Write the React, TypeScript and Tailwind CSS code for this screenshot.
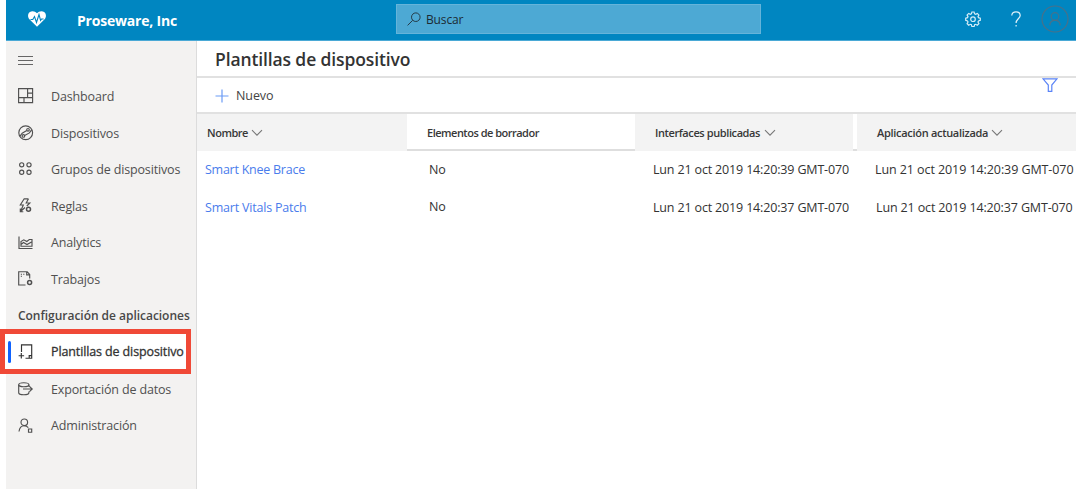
import type { ReactNode } from "react";

function Icon({ children, className = "" }: { children: ReactNode; className?: string }) {
  return (
    <svg viewBox="0 0 16 16" fill="none" stroke="currentColor" strokeWidth="1.15" className={"h-4 w-4 shrink-0 " + className}>
      {children}
    </svg>
  );
}

function Chevron() {
  return (
    <svg viewBox="0 0 12 8" fill="none" stroke="#777" strokeWidth="1.1" className="h-2 w-3 shrink-0">
      <path d="M1 1.2 6 6.2l5-5" />
    </svg>
  );
}

const icons = {
  dashboard: <Icon><path d="M.6.6h14v14H.6zM9.600.6v9M.6 9.600h14M9.600 5.100h5M6 9.600v5" /></Icon>,
  devices: <Icon><circle cx="7.700" cy="7.700" r="6.900" /><circle cx="10" cy="4.800" r="1.300" /><circle cx="5.400" cy="10.900" r="1.300" /><path d="M2 11.200 4.200 8.200 8.800 5.600M6.600 10.500 11.400 7.900 13.600 4.800" /></Icon>,
  groups: <Icon><circle cx="3.700" cy="3.800" r="2.100" /><circle cx="11" cy="3.800" r="2.100" /><circle cx="3.700" cy="11.200" r="2.100" /><circle cx="11" cy="11.200" r="2.100" /></Icon>,
  rules: <Icon><path d="M10.500.8H6.200L2.300 7h3L2.500 13.500l4.500-4M10.500.8 8.200 5h3.600L8.800 8M2.300 10.500v3.200h3" /><circle cx="10.500" cy="11.300" r="2" strokeWidth="1.500" /></Icon>,
  analytics: <Icon><path d="M1 1.500v12h13.500M3 11.200V6.500l2.800-1.700 3 1.700 2.500-2h2.700v6.700zM3 9.500 5.500 7.500l3.500 2 4.500-2.500" /></Icon>,
  jobs: <Icon><path d="M7.500 14H.7V.7h8.500L11.700 3.500v4M8.700.8v3h3M2.800 3.200h1.200M5.200 3.200h1.200M2.800 5.200h1.200" /><circle cx="11.600" cy="11.600" r="2" strokeWidth="1.500" /></Icon>,
  templates: <Icon><path d="M3.500 8V.8h10.200v13.400H7.500M11.200 14.200v-2.600h2.500M3.300 9v5.500M.6 11.700h5.500" /></Icon>,
  exporting: <Icon><ellipse cx="5.800" cy="3.700" rx="5.100" ry="2" /><path d="M.7 3.700v8c0 1.100 2.300 2 5.100 2s5.100-.9 5.100-2v-1.200M10.900 3.700v2M5 8h9M11.500 5.400 14.200 8l-2.700 2.600" /></Icon>,
  admin: <Icon><circle cx="6.300" cy="4.300" r="3.300" /><path d="M1 13.500C1.500 9.700 3.500 7.700 6.300 7.700c1.700 0 3 .7 4 2" /><path d="M10.500 11h3.200v3.200h-3.200z" /></Icon>,
};

function NavItem({ icon, label }: { icon: ReactNode; label: string }) {
  return (
    <a className="flex h-[36.6px] items-center gap-[17px] pl-3 text-[#505050]">
      {icon}
      <span className="whitespace-nowrap pt-[2px] text-[12.5px] tracking-[-0.15px]">{label}</span>
    </a>
  );
}

function Sidebar() {
  return (
    <nav className="relative ml-1.5 w-[191px] shrink-0 border-r border-[#dcdcdc] bg-[#f3f2f1]">
      <div className="flex h-[37px] items-center pl-3 text-[#666]">
        <Icon><path d="M0 4.500h15M0 8.500h15M0 12.500h15" /></Icon>
      </div>
      <NavItem icon={icons.dashboard} label="Dashboard" />
      <NavItem icon={icons.devices} label="Dispositivos" />
      <NavItem icon={icons.groups} label="Grupos de dispositivos" />
      <NavItem icon={icons.rules} label="Reglas" />
      <NavItem icon={icons.analytics} label="Analytics" />
      <NavItem icon={icons.jobs} label="Trabajos" />
      <div className="flex h-[36.6px] items-center whitespace-nowrap pl-3 pt-[1px] text-[12px] font-semibold tracking-[-0.03px] text-[#484848]">Configuración de aplicaciones</div>
      <div className="h-[36.6px]" />
      <NavItem icon={icons.exporting} label="Exportación de datos" />
      <NavItem icon={icons.admin} label="Administración" />
      <div className="absolute -left-1.5 top-[288px] flex h-[45px] w-[191px] items-center border-[5px] border-[#f04937] bg-white text-[#333]">
        <span className="ml-[3px] h-[22px] w-[3px] rounded-sm bg-[#0f62fe]" />
        <span className="ml-[7px] flex items-center gap-[17px]">
          {icons.templates}
          <span className="whitespace-nowrap pt-[1px] text-[12.5px] tracking-[-0.12px] [-webkit-text-stroke:0.3px_#333]">Plantillas de dispositivo</span>
        </span>
      </div>
    </nav>
  );
}

function TopBar() {
  return (
    <header className="ml-1.5 flex h-[41px] shrink-0 items-center border-b border-[#4aa9d6] bg-[#0086c1] pb-[2px] text-white">
      <svg viewBox="0 0 18 16" className="ml-[22px] h-4 w-[18px]">
        <path fill="#fff" d="M9 15.8 1.4 8.2C-.5 6.2-.3 3 1.5 1.3 3.7-.5 7-.2 9 2.3c2-2.5 5.300-2.800 7.500-1 1.800 1.700 2 4.900.1 6.900z" />
        <path fill="none" stroke="#0086c1" strokeWidth="1.1" d="M2.500 8.500h2.300L6.500 5.500l2 6 2.500-8 1.600 6 1-1.500h2" />
      </svg>
      <span className="ml-[31px] w-[319px] whitespace-nowrap pt-[2px] text-[14px] font-bold tracking-[-0.2px]">Proseware, Inc</span>
      <div className="flex h-[30px] w-[365px] items-center border border-[#65b4da] bg-[#4da9d4] pl-[10px] text-[#253a46]">
        <svg viewBox="0 0 14 14" fill="none" stroke="currentColor" className="h-[14px] w-[14px]">
          <circle cx="8.800" cy="5.200" r="4.300" /><path d="M5.700 8.300.600 13.400" />
        </svg>
        <span className="ml-[5px] pt-[1px] text-[12px] tracking-[-0.15px] text-[#1c2a33]">Buscar</span>
      </div>
      <svg viewBox="0 0 16 16" fill="none" stroke="#d6edf7" strokeWidth="1.200" className="ml-[204px] h-4 w-4">
        <path d="M6.900 1h2.200l.5 1.800 1.100.5 1.600-.9 1.600 1.600-.9 1.600.5 1.100 1.800.5v2.200l-1.800.5-.5 1.100.9 1.600-1.600 1.600-1.600-.9-1.100.5-.5 1.800H6.900l-.5-1.800-1.100-.5-1.600.9L2.100 12.600 3 11l-.5-1.100L.7 9.400V7.200l1.800-.5L3 5.600 2.100 4l1.600-1.600 1.600.9 1.100-.5z" />
        <circle cx="8" cy="8.200" r="2.300" />
      </svg>
      <svg viewBox="0 0 10 16" fill="none" stroke="#e0f2fa" strokeWidth="1.200" className="ml-[30px] h-4 w-[10px]">
        <path d="M.8 4.600C.8 2.200 2.500.8 5 .8s4.200 1.500 4.200 3.700c0 3.300-4.100 3.400-4.100 7.500M5.100 14v1.500" />
      </svg>
      <svg viewBox="0 0 28 28" fill="none" stroke="#47718a" strokeWidth="1.200" className="ml-[20px] h-7 w-7 shrink-0">
        <circle cx="14" cy="14" r="13" /><circle cx="14" cy="11.500" r="3.800" /><path d="M8.800 20.500c0-3 2-5.200 5.200-5.200s5.200 2.200 5.200 5.200" />
      </svg>
    </header>
  );
}

export default function App() {
  return (
    <div className="flex h-[489px] w-[1076px] flex-col overflow-hidden bg-white font-['Open_Sans',sans-serif] text-[#333]">
      <TopBar />
      <div className="flex min-h-0 flex-1">
        <Sidebar />
        <main className="min-w-0 flex-1">
          <h1 className="flex h-[37px] items-center border-b-2 border-[#e1e1e1] pl-[18px] pt-[2px] text-[17.5px] font-semibold tracking-[-0.12px]">Plantillas de dispositivo</h1>
          <div className="flex h-9 items-center border-b-2 border-[#e1e1e1] pl-[18px]">
            <svg viewBox="0 0 14 14" fill="none" stroke="#6b9bf5" strokeWidth="1.200" className="mt-[1px] h-[14px] w-[14px]"><path d="M7 .5v13M.5 7h13" /></svg>
            <span className="ml-[7px] pt-[2px] text-[12.5px] tracking-[-0.1px] text-[#444]">Nuevo</span>
            <svg viewBox="0 0 16 14" fill="none" stroke="#5b84f7" strokeWidth="1.200" className="mb-[20px] ml-auto mr-[18px] h-[14px] w-4"><path d="M1 .8h14L9.800 7v6.300H6.300V7z" /></svg>
          </div>
          <div className="grid h-[37px] grid-cols-[210px_228px_218px_4px_219px] text-[11px] font-semibold text-[#383838]">
            <div className="flex items-center gap-[3px] bg-[#f3f3f3] pl-[10px] pt-[1px] tracking-[-0.46px]">Nombre<Chevron /></div>
            <div className="flex items-center border-b-2 border-[#dedede] pl-5 pt-[3px] tracking-[-0.5px]">Elementos de borrador</div>
            <div className="flex items-center gap-1 bg-[#f3f3f3] pl-5 pt-[1px] tracking-[-0.4px]">Interfaces publicadas<Chevron /></div>
            <div className="border-b-2 border-[#dedede]" />
            <div className="flex items-center gap-[3px] bg-[#f3f3f3] pl-5 pt-[1px] tracking-[-0.3px]">Aplicación actualizada<Chevron /></div>
          </div>
          <div className="grid h-[38px] grid-cols-[210px_228px_222px_219px] items-center whitespace-nowrap text-[12.5px] tracking-[-0.16px]">
            <a className="pl-2 tracking-[-0.25px] text-[#4a7cec]">Smart Knee Brace</a>
            <span className="pl-[22px]">No</span>
            <span className="pl-[18px]">Lun 21 oct 2019 14:20:39 GMT-070</span>
            <span className="pl-[18px] tracking-[-0.08px]">Lun 21 oct 2019 14:20:39 GMT-070</span>
          </div>
          <div className="grid h-[38px] grid-cols-[210px_228px_222px_219px] items-center whitespace-nowrap text-[12.5px] tracking-[-0.16px]">
            <a className="pl-2 tracking-[-0.2px] text-[#4a7cec]">Smart Vitals Patch</a>
            <span className="pb-[2px] pl-[22px]">No</span>
            <span className="pl-[18px]">Lun 21 oct 2019 14:20:37 GMT-070</span>
            <span className="pl-[19px] tracking-[-0.14px]">Lun 21 oct 2019 14:20:37 GMT-070</span>
          </div>
        </main>
      </div>
    </div>
  );
}
